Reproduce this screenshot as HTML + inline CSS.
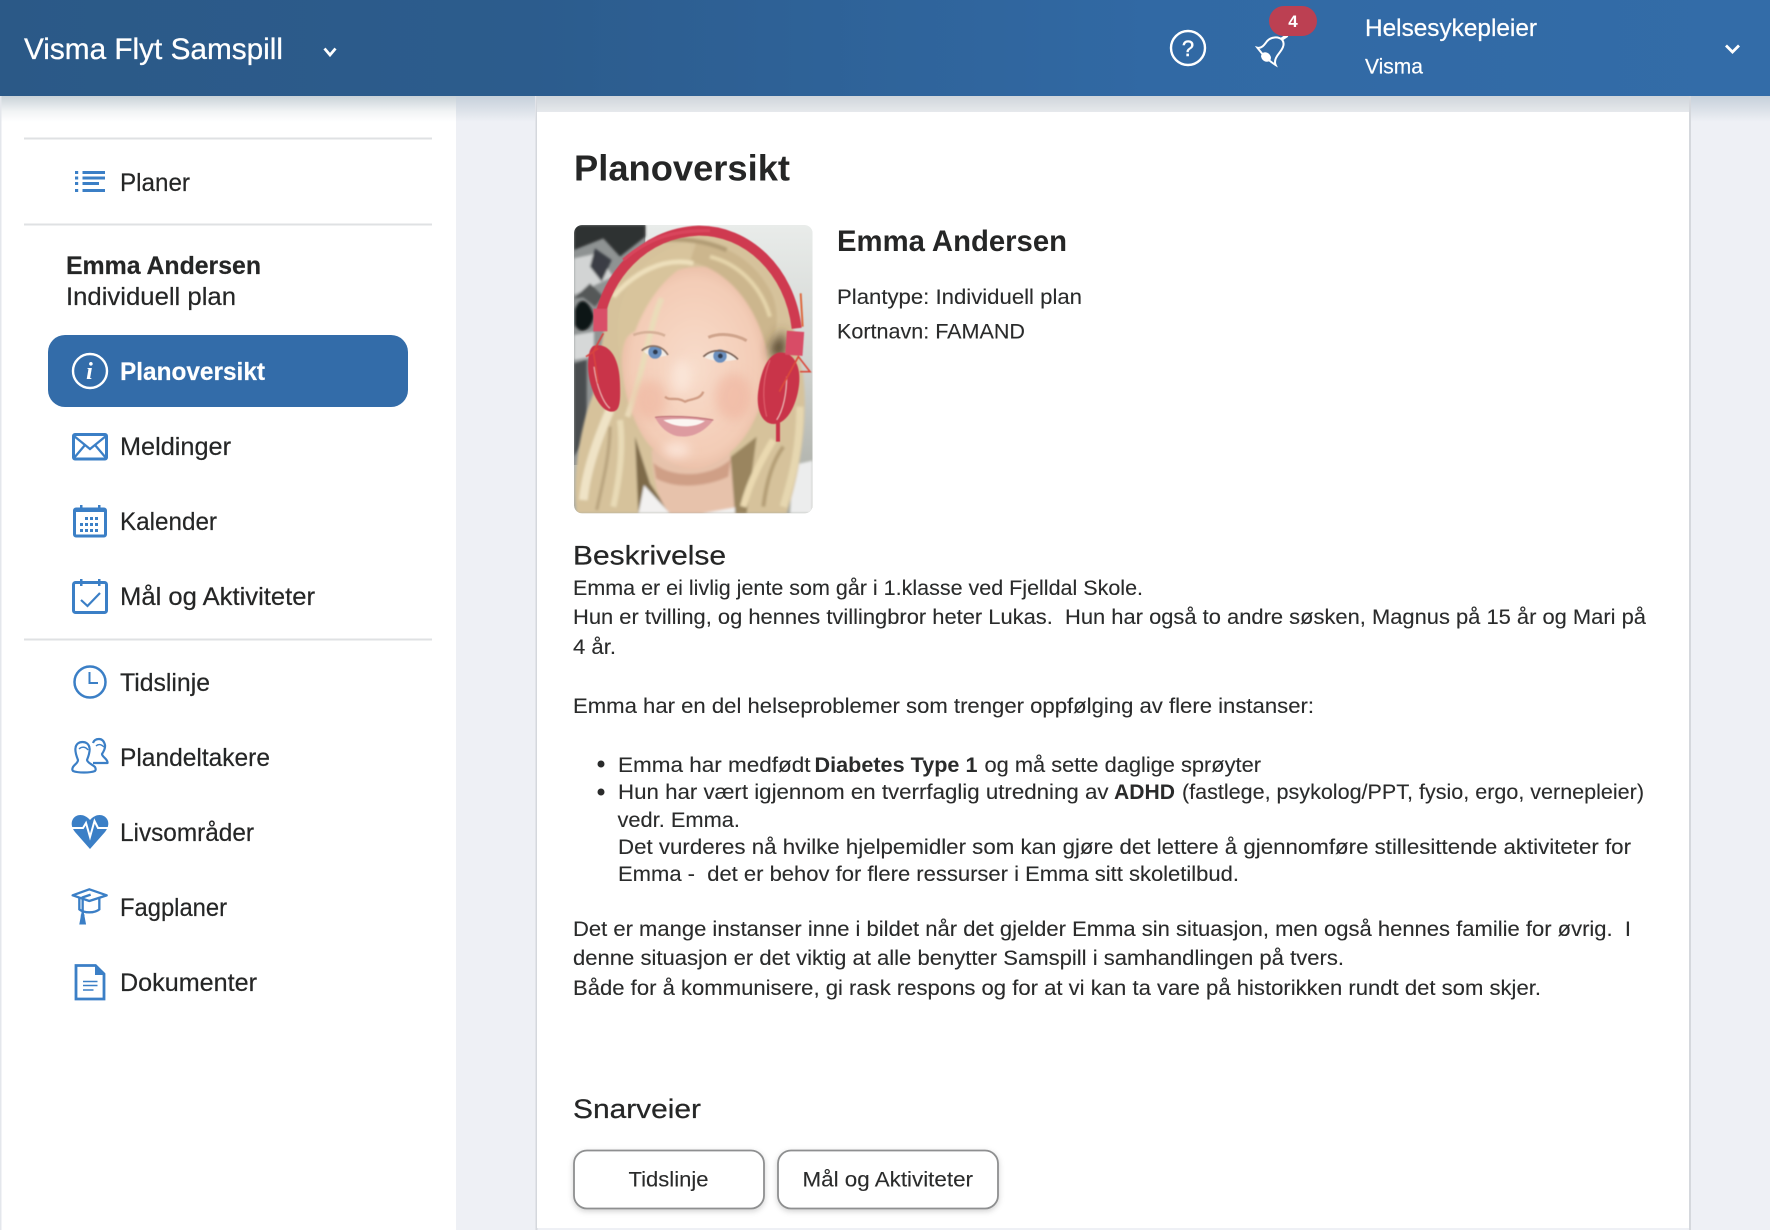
<!DOCTYPE html>
<html lang="no"><head><meta charset="utf-8"><title>Planoversikt</title>
<style>
html,body{margin:0;padding:0;background:#eef0f5;width:1770px;height:1230px;overflow:hidden}
svg{display:block}
text{font-family:"Liberation Sans",sans-serif;fill:#252626}
.nav{font-size:25px;stroke:#252626;stroke-width:.2px}
.b{font-size:21.5px;fill:#2a2b2b;stroke:#2a2b2b;stroke-width:.12px}
.bb{font-size:21.5px;font-weight:700;fill:#2a2b2b}
.h2{font-size:27px;stroke:#252626;stroke-width:.25px}
.ic{fill:none;stroke:#3b7fc6;stroke-width:2.5}
.f{fill:#3b7fc6}
</style></head><body>
<svg xmlns="http://www.w3.org/2000/svg" width="1770" height="1230" viewBox="0 0 1770 1230">
<defs>
<linearGradient id="hd" x1="0" x2="1" y1="0" y2="0"><stop offset="0" stop-color="#2b5987"/><stop offset=".3" stop-color="#2c5c8d"/><stop offset=".65" stop-color="#3169a4"/><stop offset="1" stop-color="#336ca8"/></linearGradient>
<linearGradient id="s1" x1="0" x2="0" y1="0" y2="1"><stop offset="0" stop-color="#c9d2d8"/><stop offset=".6" stop-color="#f2f4f5"/><stop offset="1" stop-color="#fff"/></linearGradient>
<linearGradient id="s2" x1="0" x2="0" y1="0" y2="1"><stop offset="0" stop-color="#c6d0da"/><stop offset="1" stop-color="#eef0f5"/></linearGradient>
<linearGradient id="s3" x1="0" x2="0" y1="0" y2="1"><stop offset="0" stop-color="#cfd5db"/><stop offset="1" stop-color="#e6e9ec"/></linearGradient>
<linearGradient id="bgr" x1="0" x2="0" y1="0" y2="1"><stop offset="0" stop-color="#e9ecea"/><stop offset=".45" stop-color="#d2d5d2"/><stop offset="1" stop-color="#a6a8a0"/></linearGradient>
<radialGradient id="face" cx=".5" cy=".5" r=".62"><stop offset="0" stop-color="#f8dccb"/><stop offset=".7" stop-color="#f3ccb6"/><stop offset="1" stop-color="#dfae94"/></radialGradient>
<filter id="bl" x="-20%" y="-20%" width="140%" height="140%"><feGaussianBlur stdDeviation="4"/></filter>
<filter id="bl2" x="-60%" y="-60%" width="220%" height="220%"><feGaussianBlur stdDeviation="16"/></filter>
<filter id="ds" x="-10%" y="-20%" width="120%" height="150%"><feDropShadow dx="0" dy="2" stdDeviation="3" flood-color="#000" flood-opacity=".18"/></filter>
<clipPath id="ph"><rect x="12" y="15" width="716" height="865" rx="24"/></clipPath>
</defs>

<!-- page -->
<rect width="1770" height="1230" fill="#eef0f5"/>
<rect x="0" y="96" width="1.5" height="1134" fill="#e4e7ec"/>
<rect x="1.5" y="96" width="454.5" height="1134" fill="#fff"/>
<rect x="1.5" y="96" width="454.5" height="26" fill="url(#s1)"/>
<rect x="456" y="96" width="79" height="26" fill="url(#s2)"/>
<rect x="1691" y="96" width="79" height="26" fill="url(#s2)"/>
<rect x="535.500" y="96" width="2" height="1134" fill="#d5d8dd"/>
<rect x="1689" y="96" width="2" height="1134" fill="#d5d8dd"/>
<rect x="537" y="96" width="1152" height="1132" fill="#fff"/>
<rect x="537" y="96" width="1152" height="16" fill="url(#s3)"/>

<!-- header -->
<rect width="1770" height="96" fill="url(#hd)"/>
<text x="24" y="59" font-size="30" style="fill:#fff;stroke:#fff;stroke-width:.3px" textLength="259" lengthAdjust="spacingAndGlyphs">Visma Flyt Samspill</text>
<path d="M324.500 48.500 L330 55 L335.500 48.500" fill="none" stroke="#fff" stroke-width="2.800"/>
<circle cx="1188" cy="48" r="17" fill="none" stroke="#fff" stroke-width="2.400"/>
<text x="1188" y="56" font-size="22" text-anchor="middle" style="fill:#fff;stroke:#fff;stroke-width:.4px">?</text>
<g transform="translate(1240 0) scale(.3333)" fill="none" stroke="#fff" stroke-width="6">
<path d="M52 143 C64 146 72 136 80 125 C92 110 115 108 127 120 C137 134 125 150 117 160 C107 172 102 184 107 195 C90 185 68 165 52 143 Z"/>
<ellipse cx="78" cy="171" rx="13" ry="10" transform="rotate(40 78 171)" fill="#fff"/>
<path d="M124 118 L142 106" stroke-width="10"/>
</g>
<rect x="1269" y="6" width="48" height="30" rx="15" fill="#bc4052"/>
<text x="1293" y="27" font-size="17" font-weight="700" text-anchor="middle" style="fill:#fff">4</text>
<text x="1365" y="36" font-size="24" style="fill:#fff;stroke:#fff;stroke-width:.25px" textLength="172" lengthAdjust="spacingAndGlyphs">Helsesykepleier</text>
<text x="1365" y="73.500" font-size="21.500" style="fill:#fff;stroke:#fff;stroke-width:.2px" textLength="58" lengthAdjust="spacingAndGlyphs">Visma</text>
<path d="M1726 45.500 L1732.500 52 L1739 45.500" fill="none" stroke="#fff" stroke-width="2.800"/>

<!-- sidebar -->
<rect x="24" y="137.500" width="408" height="2" fill="#dfe1e3"/>
<rect x="24" y="223.500" width="408" height="2" fill="#dfe1e3"/>
<rect x="24" y="638.500" width="408" height="2" fill="#dfe1e3"/>

<g class="f"><rect x="75" y="171" width="3.200" height="3"/><rect x="75" y="176.500" width="3.200" height="3"/><rect x="75" y="182" width="3.200" height="3"/><rect x="75" y="189" width="3.200" height="3"/>
<rect x="82.500" y="171" width="22.500" height="3"/><rect x="82.500" y="176.500" width="22.500" height="3"/><rect x="82.500" y="182" width="16.500" height="3"/><rect x="82.500" y="189" width="22.500" height="3"/></g>
<text class="nav" x="120" y="191" textLength="70" lengthAdjust="spacingAndGlyphs">Planer</text>

<text class="nav" x="66" y="274" font-weight="700" textLength="195" lengthAdjust="spacingAndGlyphs">Emma Andersen</text>
<text class="nav" x="66" y="305" textLength="170" lengthAdjust="spacingAndGlyphs">Individuell plan</text>

<rect x="48" y="335" width="360" height="72" rx="17" fill="#336ca9"/>
<circle cx="90" cy="371" r="17" fill="none" stroke="#fff" stroke-width="2.400"/>
<text x="89.500" y="379" font-size="24" font-style="italic" font-weight="700" text-anchor="middle" style="font-family:'Liberation Serif',serif;fill:#fff">i</text>
<text class="nav" x="120" y="380" font-weight="700" style="fill:#fff;stroke:#fff" textLength="145" lengthAdjust="spacingAndGlyphs">Planoversikt</text>

<rect class="ic" style="stroke-width:3" x="73.500" y="434.500" width="33" height="24.500" rx="1.500"/>
<path class="ic" style="stroke-width:2.300" d="M74 436 L90 449 L106 436 M74 458 L85 445 M106 458 L95 445"/>
<text class="nav" x="120" y="455" textLength="111" lengthAdjust="spacingAndGlyphs">Meldinger</text>

<rect class="ic" style="stroke-width:3" x="74.500" y="509" width="31" height="27" rx="1.500"/>
<rect class="f" x="74.500" y="509" width="31" height="3"/>
<rect class="f" x="80" y="505" width="2.500" height="6"/><rect class="f" x="98" y="505" width="2.500" height="6"/>
<g class="f"><rect x="85" y="517" width="3" height="3"/><rect x="90" y="517" width="3" height="3"/><rect x="95" y="517" width="3" height="3"/>
<rect x="80" y="523" width="3" height="3"/><rect x="85" y="523" width="3" height="3"/><rect x="90" y="523" width="3" height="3"/><rect x="95" y="523" width="3" height="3"/>
<rect x="80" y="529" width="3" height="3"/><rect x="85" y="529" width="3" height="3"/><rect x="90" y="529" width="3" height="3"/><rect x="95" y="529" width="3" height="3"/></g>
<text class="nav" x="120" y="530" textLength="97" lengthAdjust="spacingAndGlyphs">Kalender</text>

<rect class="ic" style="stroke-width:3" x="73.500" y="582.500" width="33" height="30" rx="2"/>
<rect class="f" x="80" y="579" width="2.500" height="7"/><rect class="f" x="98" y="579" width="2.500" height="7"/>
<path class="ic" style="stroke-width:2.200" d="M81 600 L87.500 606 L100 593"/>
<text class="nav" x="120" y="605" textLength="195" lengthAdjust="spacingAndGlyphs">Mål og Aktiviteter</text>

<circle class="ic" cx="90" cy="682" r="15.500"/>
<path class="ic" style="stroke-width:2" d="M89.500 672 V683 H98"/>
<text class="nav" x="120" y="691" textLength="90" lengthAdjust="spacingAndGlyphs">Tidslinje</text>

<g fill="none" stroke="#3b7fc6" stroke-width="2.200" stroke-linejoin="round">
<!-- back person -->
<path d="M93 763 H107.500 C108 759 102 757 102 754 C104 751 105.500 748 105 745 C104 741 102 739 99 739 C96 739 94 740 93 743"/>
<!-- front person -->
<path d="M78 760 C76 755 75 751 75.500 748 C76 744 79 742 82.500 742 C86 742 89 744 89.500 748 C90 751 89 755 87 760 C87.500 763 92 764 95 767 C96 769 96 770 95 771 C90 773 78 773 73 771 C72 770 72 769 73 767 C75 764 78 763 78 760 Z"/>
<path d="M79 749 C82 746 86 747 88 750 M96 746 C98 744 101 744 104 747" stroke-width="1.400"/>
</g>
<text class="nav" x="120" y="766" textLength="150" lengthAdjust="spacingAndGlyphs">Plandeltakere</text>

<path class="f" d="M90 849 L75 832 C71 827 71 822 73 819 C76 814 84 813 90 820 C96 813 104 814 107 819 C109 822 109 827 105 832 Z"/>
<path d="M71 828 H83 L86 823 L90 837 L94.500 821 L98 828 H109" fill="none" stroke="#fff" stroke-width="2"/>
<text class="nav" x="120" y="841" textLength="134" lengthAdjust="spacingAndGlyphs">Livsområder</text>

<g transform="translate(60 880) scale(.3333)" fill="none" stroke="#3b7fc6" stroke-width="7">
<path d="M38 46 L88 28 L140 46 L88 63 Z" stroke-linejoin="round"/>
<path d="M58 52 V88 C72 100 104 100 118 88 V52"/>
<path d="M92 44 L68 52 V100"/>
<path d="M68 98 L62 130 H74 Z" fill="#3b7fc6"/>
<rect x="64" y="105" width="8" height="25" fill="#3b7fc6" stroke-width="3"/>
</g>
<text class="nav" x="120" y="916" textLength="107" lengthAdjust="spacingAndGlyphs">Fagplaner</text>

<path class="ic" style="stroke-width:2.800" d="M76 965.500 H95.500 L104 974 V999 H76 Z"/>
<path class="f" d="M95 965 L105 975 H95 Z"/>
<path class="ic" style="stroke-width:1.600" d="M83 981.500 H97.500 M83 985.500 H97.500 M83 990 H93.500"/>
<text class="nav" x="120" y="991" textLength="137" lengthAdjust="spacingAndGlyphs">Dokumenter</text>

<!-- main -->
<text x="574" y="180.500" font-size="36" font-weight="700" textLength="216" lengthAdjust="spacingAndGlyphs">Planoversikt</text>

<!-- photo -->
<g transform="translate(570 220) scale(.33333)" clip-path="url(#ph)">
<g clip-path="url(#ph)">
<rect x="12" y="15" width="716" height="865" fill="url(#bgr)"/>
<rect x="12" y="15" width="214" height="720" fill="#8f9393"/>
<g filter="url(#bl)">
<path d="M12 15 H226 V50 L150 110 L100 55 L12 90 Z" fill="#2e3132"/>
<path d="M12 115 L80 100 L130 170 L12 225 Z" fill="#d2d4d4"/>
<path d="M15 270 C30 225 58 240 72 290 C62 335 30 345 15 315 Z" fill="#111213"/>
<path d="M12 345 L72 335 L72 410 L12 420 Z" fill="#d6d8d8"/>
<path d="M12 430 L50 420 L50 650 L12 710 Z" fill="#4a4d4f"/>
<path d="M75 85 L125 120 L95 185 L60 140 Z" fill="#3a3e44"/>
<path d="M12 235 L60 190 L100 230 L75 260 L40 232 Z" fill="#545859"/>
</g>
<g filter="url(#bl)">
<!-- shirt -->
<path d="M670 735 L728 722 V880 H660 Z" fill="#eceded"/>
<!-- back hair -->
<path d="M105 310 C110 130 240 40 380 38 C540 38 650 160 665 300 L700 470 C715 600 690 760 650 880 H20 C5 780 30 620 70 520 Z" fill="#d6c29b"/>
<path d="M195 650 L240 790 L300 880 H205 Z" fill="#7e6b48"/>
<path d="M470 720 L560 650 L530 880 H470 Z" fill="#9a855e"/>
<!-- neck -->
<path d="M245 690 L480 690 L495 880 H300 C270 850 250 800 245 690 Z" fill="#e7c2ab"/>
<path d="M250 728 C300 775 420 775 482 718 L475 770 C400 805 310 805 258 775 Z" fill="#cf9f86"/>
<path d="M205 880 L222 795 L300 880 Z" fill="#f2f1f0"/>
<path d="M395 880 H495 V862 Z" fill="#f2f1f0"/>
<!-- face -->
<path d="M155 400 C160 240 270 140 390 140 C510 140 595 260 592 420 C590 560 530 700 400 742 C350 757 280 730 230 665 C190 610 152 500 155 400 Z" fill="url(#face)"/>
<!-- hair strands -->
<path d="M365 125 C295 160 235 230 195 335 C170 345 160 360 155 420 C125 330 135 120 360 65 Z" fill="#d8c49c"/>
<path d="M360 125 C460 145 555 240 590 390 C625 345 630 280 605 220 C560 130 480 75 380 65 Z" fill="#ccb68d"/>
<path d="M275 235 C240 310 225 440 172 590" fill="none" stroke="#eadcb9" stroke-width="17"/>
<path d="M130 230 C190 160 280 110 370 130" fill="none" stroke="#eee0bc" stroke-width="14"/>
<path d="M420 110 C500 130 570 190 600 290" fill="none" stroke="#e6d5ab" stroke-width="12"/>
<path d="M280 60 C330 55 400 60 470 90" fill="none" stroke="#b29d76" stroke-width="14"/>
<path d="M40 840 C50 740 90 640 120 570" fill="none" stroke="#efe3c6" stroke-width="26"/>
<path d="M130 860 C150 770 160 680 150 600" fill="none" stroke="#e8dab6" stroke-width="18"/>
<path d="M80 870 C100 780 120 700 120 620" fill="none" stroke="#b9a47f" stroke-width="10"/>
<path d="M640 860 C670 760 690 680 690 560" fill="none" stroke="#e6d7b0" stroke-width="22"/>
<path d="M520 860 C540 780 580 710 610 660" fill="none" stroke="#ead9b0" stroke-width="20"/>
<path d="M580 860 C590 780 610 720 640 680" fill="none" stroke="#b49e76" stroke-width="12"/>
</g>
<g filter="url(#bl2)">
<ellipse cx="240" cy="540" rx="50" ry="60" fill="#eeb39c" opacity=".55"/>
<ellipse cx="490" cy="530" rx="55" ry="70" fill="#eeb09a" opacity=".55"/>
<ellipse cx="320" cy="690" rx="40" ry="22" fill="#fdeee6" opacity=".7"/>
<ellipse cx="335" cy="470" rx="30" ry="50" fill="#fbe8dc" opacity=".8"/>
<path d="M600 380 L640 330 L650 400 L610 420 Z" fill="#4f4029"/>
</g>
<g style="filter:blur(1.500px)">
<!-- headband -->
<path d="M90 290 C110 180 210 40 385 32 C530 30 660 150 680 325" fill="none" stroke="#cf3a50" stroke-width="30"/>
<path d="M160 120 C240 50 320 30 420 32" fill="none" stroke="#d9455c" stroke-width="10"/>
<!-- left earpiece -->
<path d="M70 378 C115 365 148 410 150 490 C152 550 150 580 118 574 C80 565 48 480 55 420 C56 400 60 385 70 378 Z" fill="#c93449"/>
<path d="M72 440 C80 500 100 550 120 565" fill="none" stroke="#e8aaa8" stroke-width="4"/>
<path d="M48 410 L85 385 M100 340 L70 395 L85 490" fill="none" stroke="#d8433f" stroke-width="5"/>
<rect x="70" y="266" width="42" height="68" fill="#d94f68"/>
<!-- right earpiece -->
<path d="M625 398 C665 392 692 430 688 485 C684 545 655 612 612 612 C572 612 556 560 566 505 C575 450 592 408 625 398 Z" fill="#c93449"/>
<path d="M650 470 C650 520 640 570 620 600" fill="none" stroke="#e8b4b0" stroke-width="4"/>
<path d="M600 420 C580 470 575 530 590 590" fill="none" stroke="#dc5a68" stroke-width="4"/>
<path d="M628 515 L685 410 L720 455 L690 455" fill="none" stroke="#db4a3c" stroke-width="5"/>
<rect x="648" y="334" width="52" height="72" transform="rotate(4 674 370)" fill="#d84c66"/>
<path d="M624 600 L624 665" stroke="#c93449" stroke-width="12"/>
<path d="M692 220 L698 320" stroke="#dd6a3f" stroke-width="6"/>
<!-- eyes -->
<path d="M222 395 C240 376 275 378 294 405 C270 414 240 414 222 395 Z" fill="#f2ece6"/>
<circle cx="255" cy="396" r="20" fill="#6a8fbe"/><circle cx="256" cy="396" r="7" fill="#2e3a4e"/>
<path d="M215 392 C240 370 275 374 294 405" fill="none" stroke="#8e7466" stroke-width="5"/>
<path d="M403 412 C425 388 470 388 502 418 C470 426 430 426 403 412 Z" fill="#f2ece6"/>
<circle cx="450" cy="408" r="20" fill="#6a8fbe"/><circle cx="451" cy="408" r="7" fill="#2e3a4e"/>
<path d="M400 410 C425 386 470 384 504 418" fill="none" stroke="#7a6256" stroke-width="5"/>
<path d="M190 345 C225 332 260 335 285 347" fill="none" stroke="#d6b098" stroke-width="8"/>
<path d="M415 352 C450 338 495 342 530 362" fill="none" stroke="#cfa48c" stroke-width="9"/>
<!-- nose -->
<path d="M285 530 C300 545 315 528 345 545 C365 535 390 540 400 515" fill="none" stroke="#cf9c84" stroke-width="7"/>
<!-- mouth -->
<path d="M255 592 C300 585 380 588 430 600 C400 640 360 655 320 648 C290 640 270 620 255 592 Z" fill="#dd9ba0"/>
<path d="M280 600 C320 595 370 595 405 603 C380 622 320 628 280 600 Z" fill="#fbf6f2"/>
<path d="M255 592 C290 586 380 590 430 600" fill="none" stroke="#b86a70" stroke-width="3"/>
</g>
</g>
</g>

<text x="837" y="251" font-size="29.500" font-weight="700" textLength="230" lengthAdjust="spacingAndGlyphs">Emma Andersen</text>
<text class="b" x="837" y="304" textLength="245" lengthAdjust="spacingAndGlyphs">Plantype: Individuell plan</text>
<text class="b" x="837" y="338.500" textLength="188" lengthAdjust="spacingAndGlyphs">Kortnavn: FAMAND</text>

<text class="h2" x="573" y="564.500" textLength="153" lengthAdjust="spacingAndGlyphs">Beskrivelse</text>
<text class="b" x="573" y="595" textLength="570" lengthAdjust="spacingAndGlyphs">Emma er ei livlig jente som går i 1.klasse ved Fjelldal Skole.</text>
<text class="b" x="573" y="624" textLength="1073" lengthAdjust="spacingAndGlyphs">Hun er tvilling, og hennes tvillingbror heter Lukas.&#160; Hun har også to andre søsken, Magnus på 15 år og Mari på</text>
<text class="b" x="573" y="654" textLength="43" lengthAdjust="spacingAndGlyphs">4 år.</text>
<text class="b" x="573" y="713" textLength="741" lengthAdjust="spacingAndGlyphs">Emma har en del helseproblemer som trenger oppfølging av flere instanser:</text>

<circle cx="601" cy="764" r="3.500" fill="#2a2b2b"/>
<text class="b" x="618" y="772" textLength="192.500" lengthAdjust="spacingAndGlyphs">Emma har medfødt</text>
<text class="bb" x="814.500" y="772" textLength="163" lengthAdjust="spacingAndGlyphs">Diabetes Type 1</text>
<text class="b" x="984.500" y="772" textLength="276.500" lengthAdjust="spacingAndGlyphs">og må sette daglige sprøyter</text>
<circle cx="601" cy="792" r="3.500" fill="#2a2b2b"/>
<text class="b" x="618" y="799" textLength="490.500" lengthAdjust="spacingAndGlyphs">Hun har vært igjennom en tverrfaglig utredning av</text>
<text class="bb" x="1114" y="799" textLength="61" lengthAdjust="spacingAndGlyphs">ADHD</text>
<text class="b" x="1182" y="799" textLength="462" lengthAdjust="spacingAndGlyphs">(fastlege, psykolog/PPT, fysio, ergo, vernepleier)</text>
<text class="b" x="617.500" y="827" textLength="122.500" lengthAdjust="spacingAndGlyphs">vedr. Emma.</text>
<text class="b" x="618" y="854" textLength="1013" lengthAdjust="spacingAndGlyphs">Det vurderes nå hvilke hjelpemidler som kan gjøre det lettere å gjennomføre stillesittende aktiviteter for</text>
<text class="b" x="618" y="881" textLength="621" lengthAdjust="spacingAndGlyphs">Emma -&#160; det er behov for flere ressurser i Emma sitt skoletilbud.</text>

<text class="b" x="573" y="936" textLength="1058" lengthAdjust="spacingAndGlyphs">Det er mange instanser inne i bildet når det gjelder Emma sin situasjon, men også hennes familie for øvrig.&#160; I</text>
<text class="b" x="573" y="965" textLength="771" lengthAdjust="spacingAndGlyphs">denne situasjon er det viktig at alle benytter Samspill i samhandlingen på tvers.</text>
<text class="b" x="573" y="995" textLength="968" lengthAdjust="spacingAndGlyphs">Både for å kommunisere, gi rask respons og for at vi kan ta vare på historikken rundt det som skjer.</text>

<text class="h2" x="573" y="1118" textLength="128" lengthAdjust="spacingAndGlyphs">Snarveier</text>
<rect x="574" y="1150.500" width="190" height="58" rx="13" fill="#fff" stroke="#8e8f90" stroke-width="1.800" filter="url(#ds)"/>
<rect x="778" y="1150.500" width="220" height="58" rx="13" fill="#fff" stroke="#8e8f90" stroke-width="1.800" filter="url(#ds)"/>
<text class="b" x="628.500" y="1186.500" textLength="80" lengthAdjust="spacingAndGlyphs">Tidslinje</text>
<text class="b" x="802.500" y="1186.500" textLength="170.500" lengthAdjust="spacingAndGlyphs">Mål og Aktiviteter</text>
</svg>
</body></html>
